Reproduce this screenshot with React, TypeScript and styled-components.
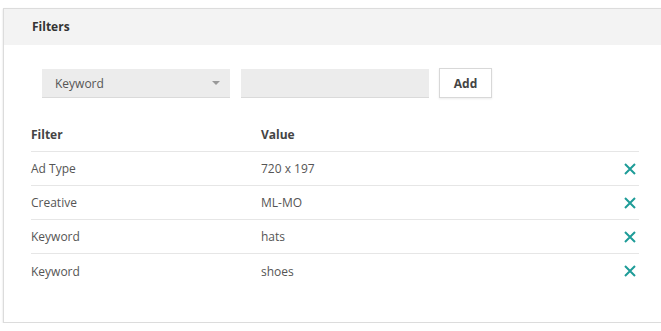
import React from "react";
import styled, { createGlobalStyle } from "styled-components";

const Global = createGlobalStyle`
  html, body { margin: 0; padding: 0; background: #fff; overflow: hidden; }
  body { font-family: "Open Sans", "Liberation Sans", sans-serif; color: #555; }
  * { box-sizing: border-box; }
`;

const Page = styled.div`
  padding: 8px 0 0 3px;
  width: 700px;
`;

const Card = styled.section`
  width: 664px;
  height: 315px;
  border: 1px solid #dcdcdc;
  background: #fff;
  box-shadow: 0 1px 2px rgba(0, 0, 0, 0.14);
  display: flex;
  flex-direction: column;
`;

const CardHeader = styled.header`
  height: 36px;
  background: #f3f3f3;
  display: flex;
  align-items: center;
  padding-left: 28px;
  padding-bottom: 1px;
  font-size: 12px;
  font-weight: 700;
  color: #333;
`;

const Body = styled.div`
  padding: 24px 27px 0 27px;
  display: flex;
  flex-direction: column;
`;

const FormRow = styled.div`
  display: flex;
  align-items: flex-start;
  gap: 11px;
  padding-left: 11px;
`;

const Select = styled.div`
  width: 188px;
  height: 29px;
  background: #ececec;
  border-bottom: 1px solid #dadada;
  display: flex;
  align-items: center;
  justify-content: space-between;
  padding: 1px 10px 0 13px;
  font-size: 12px;
  color: #555;
`;

const Caret = styled.span`
  width: 0;
  height: 0;
  border-left: 4px solid transparent;
  border-right: 4px solid transparent;
  border-top: 4px solid #999;
  margin-top: -2px;
`;

const Input = styled.input`
  width: 188px;
  height: 29px;
  background: #ececec;
  border: none;
  border-bottom: 1px solid #dadada;
  outline: none;
  padding: 0 10px;
  font-family: inherit;
  font-size: 12px;
`;

const Button = styled.button`
  margin-left: -1px;
  margin-top: -1px;
  width: 53px;
  height: 30px;
  background: #fff;
  border: 1px solid #d8d8d8;
  box-shadow: 0 1px 2px rgba(0, 0, 0, 0.08);
  font-family: inherit;
  font-size: 12px;
  font-weight: 700;
  color: #444;
  padding: 0;
`;

const Table = styled.div`
  margin-top: 20px;
  display: flex;
  flex-direction: column;
`;

const Row = styled.div<{ $head?: boolean; $last?: boolean }>`
  display: grid;
  grid-template-columns: 230px 1fr 24px;
  align-items: center;
  height: 34px;
  border-bottom: ${(p) => (p.$last ? "none" : "1px solid #e6e6e6")};
  font-size: 12px;
  font-weight: ${(p) => (p.$head ? 700 : 400)};
  color: ${(p) => (p.$head ? "#444" : "#555")};
`;

const Remove = styled.button`
  background: none;
  border: none;
  padding: 0 3px 0 0;
  width: 24px;
  height: 24px;
  display: flex;
  align-items: center;
  justify-content: flex-end;
  cursor: pointer;
`;

const XIcon = () => (
  <svg width="12" height="12" viewBox="0 0 12 12">
    <path d="M1 1L11 11M11 1L1 11" stroke="#1e9c98" strokeWidth="2" />
  </svg>
);

const rows = [
  { f: "Ad Type", v: "720 x 197" },
  { f: "Creative", v: "ML-MO" },
  { f: "Keyword", v: "hats" },
  { f: "Keyword", v: "shoes" },
];

export default function App() {
  return (
    <>
      <Global />
      <Page>
        <Card>
          <CardHeader>Filters</CardHeader>
          <Body>
            <FormRow>
              <Select>
                <span>Keyword</span>
                <Caret />
              </Select>
              <Input />
              <Button>Add</Button>
            </FormRow>
            <Table>
              <Row $head>
                <span>Filter</span>
                <span>Value</span>
                <span />
              </Row>
              {rows.map((r, i) => (
                <Row key={i} $last={i === rows.length - 1}>
                  <span>{r.f}</span>
                  <span>{r.v}</span>
                  <Remove aria-label="remove">
                    <XIcon />
                  </Remove>
                </Row>
              ))}
            </Table>
          </Body>
        </Card>
      </Page>
    </>
  );
}
